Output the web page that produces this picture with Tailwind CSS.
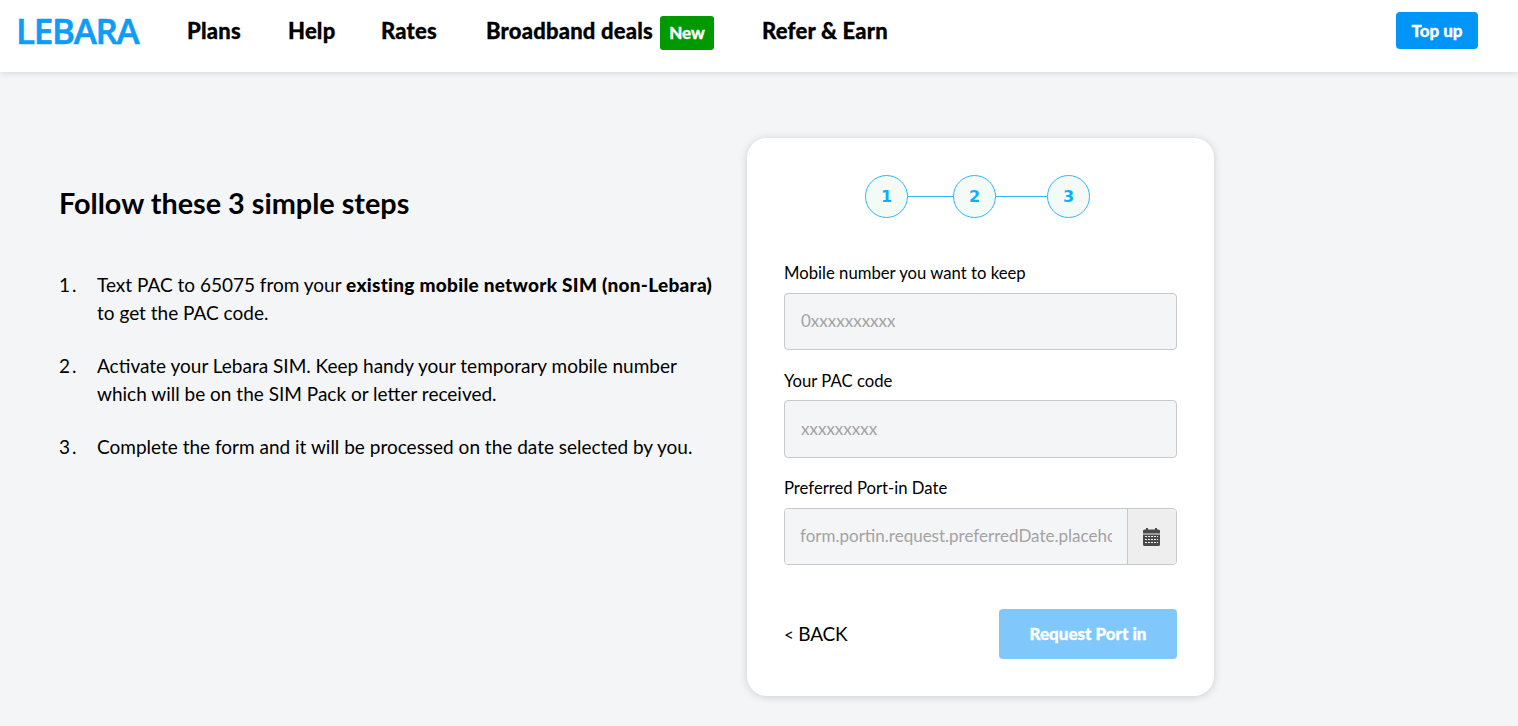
<!DOCTYPE html>
<html lang="en">

<head>
    <meta charset="utf-8" />
    <meta name="viewport" content="width=device-width, initial-scale=1.0">
    <title>Lebara Port in</title>
    <script src="https://cdn.jsdelivr.net/npm/@tailwindcss/browser@4"></script>
</head>

<body class="bg-[#f4f5f7] font-['Lato',sans-serif] text-black h-[726px] overflow-hidden">

    <!-- Header -->
    <header class="h-[72px] bg-white shadow-[0_1px_6px_rgba(0,0,0,0.12)] flex items-center pl-[16px] pr-[40px] pb-[11px] relative">
        <span class="w-[171px] text-[#0d9cf7] font-['Open_Sans',sans-serif] font-semibold text-[35px] leading-none tracking-[-1.3px] [-webkit-text-stroke:0.6px_#0d9cf7]">LEBARA</span>
        <nav class="flex items-center text-[22px] font-black tracking-[0.2px] [-webkit-text-stroke:0.3px_black]">
            <a class="w-[101px]">Plans</a>
            <a class="w-[93px]">Help</a>
            <a class="w-[105px]">Rates</a>
            <a class="w-[174px] whitespace-nowrap">Broadband deals</a>
            <span class="w-[54px] h-[34px] mr-[48px] mt-[5px] bg-[#009a00] text-white text-[17px] tracking-normal [-webkit-text-stroke:0.3px_white] rounded-[3px] flex items-center justify-center">New</span>
            <a>Refer &amp; Earn</a>
        </nav>
        <button class="ml-auto w-[82px] h-[37px] bg-[#0095f6] text-white text-[17px] font-black [-webkit-text-stroke:0.3px_white] rounded-[4px]">Top up</button>
    </header>

    <main class="flex pl-[59px] pt-[66px]">

        <!-- Steps text -->
        <section class="w-[688px] pt-[49px]">
            <h1 class="text-[28.8px] leading-[33px] font-bold">Follow these 3 simple steps</h1>
            <ol class="mt-[51px] flex flex-col gap-[25px] text-[19px] leading-[28px]">
                <li class="flex">
                    <span class="w-[38px] shrink-0 tracking-[2px]">1.</span>
                    <p class="w-[622px]">Text PAC to 65075 from your <b class="font-black tracking-[0.27px]">existing mobile network SIM (non-Lebara)</b> to get the PAC code.</p>
                </li>
                <li class="flex">
                    <span class="w-[38px] shrink-0 tracking-[2px]">2.</span>
                    <p class="w-[622px]">Activate your Lebara SIM. Keep handy your temporary mobile number which will be on the SIM Pack or letter received.</p>
                </li>
                <li class="flex">
                    <span class="w-[38px] shrink-0 tracking-[2px]">3.</span>
                    <p class="w-[622px]">Complete the form and it will be processed on the date selected by you.</p>
                </li>
            </ol>
        </section>

        <!-- Form card -->
        <section class="w-[467px] h-[558px] bg-white rounded-[20px] shadow-[0_1px_8px_rgba(0,0,0,0.16)] px-[37px] pt-[37px]">

            <!-- Stepper -->
            <div class="flex items-center justify-center pr-[6px] text-[#0ab0ff] font-['DejaVu_Sans',sans-serif] font-bold text-[16px]">
                <span class="w-[43px] h-[43px] rounded-full border border-[#2db7fb] bg-[#f4fbf6] flex items-center justify-center">1</span>
                <span class="w-[45px] h-px bg-[#2db7fb]"></span>
                <span class="w-[43px] h-[43px] rounded-full border border-[#2db7fb] bg-[#f4fbf6] flex items-center justify-center">2</span>
                <span class="w-[51px] h-px bg-[#2db7fb]"></span>
                <span class="w-[43px] h-[43px] rounded-full border border-[#2db7fb] bg-[#f4fbf6] flex items-center justify-center">3</span>
            </div>

            <label class="block mt-[44px] text-[16.7px] leading-[22px]">Mobile number you want to keep</label>
            <input class="block mt-[9px] w-full h-[57px] px-[16px] pb-[2px] bg-[#f4f5f7] border border-[#c8c9cb] rounded-[4px] text-[17px] placeholder:text-[#a3a3a3]" placeholder="0xxxxxxxxxx">

            <label class="block mt-[20px] text-[16.7px] leading-[22px]">Your PAC code</label>
            <input class="block mt-[8px] w-full h-[58px] px-[16px] pb-[2px] bg-[#f4f5f7] border border-[#c8c9cb] rounded-[4px] text-[17px] placeholder:text-[#a3a3a3]" placeholder="xxxxxxxxx">

            <label class="block mt-[19px] text-[16.7px] leading-[22px]">Preferred Port-in Date</label>
            <div class="mt-[9px] flex h-[57px] border border-[#c8c9cb] rounded-[4px] overflow-hidden">
                <input class="min-w-0 flex-1 pl-[15px] pr-[15px] pb-[2px] bg-[#f4f5f7] text-[17px] placeholder:text-[#a3a3a3]" placeholder="form.portin.request.preferredDate.placeholder">
                <span class="w-[49px] shrink-0 pr-[2px] bg-[#eeeeee] border-l border-[#c8c9cb] flex items-center justify-center">
                    <svg width="17" height="18" viewBox="0 0 17 18" class="text-[#4a4a4a]">
                        <path fill="currentColor" d="M0 3a1.5 1.5 0 0 1 1.5-1.5H3V0h2v1.5h7V0h2v1.5h1.5A1.5 1.5 0 0 1 17 3v2.5H0z" />
                        <path fill="currentColor" fill-rule="evenodd" d="M0 6.5h17v10a1.5 1.5 0 0 1-1.5 1.500h-14A1.500 1.500 0 0 1 0 16.500zM2 8v1h2V8zm3 0v1h2V8zm3 0v1h2V8zm3 0v1h2V8zm3 0v1h1V8zM2 11v1h2v-1zm3 0v1h2v-1zm3 0v1h2v-1zm3 0v1h2v-1zm3 0v1h1v-1zM2 14v1h2v-1zm3 0v1h2v-1zm3 0v1h2v-1zm3 0v1h2v-1zm3 0v1h1v-1z" />
                    </svg>
                </span>
            </div>

            <div class="mt-[44px] flex items-center justify-between">
                <a class="text-[19px] tracking-[-0.2px]"><span class="text-[17px]">&lt;</span> BACK</a>
                <button class="w-[178px] h-[50px] bg-[#80c8fb] text-white text-[17px] font-black [-webkit-text-stroke:0.3px_white] rounded-[4px]">Request Port in</button>
            </div>
        </section>
    </main>

</body>

</html>
